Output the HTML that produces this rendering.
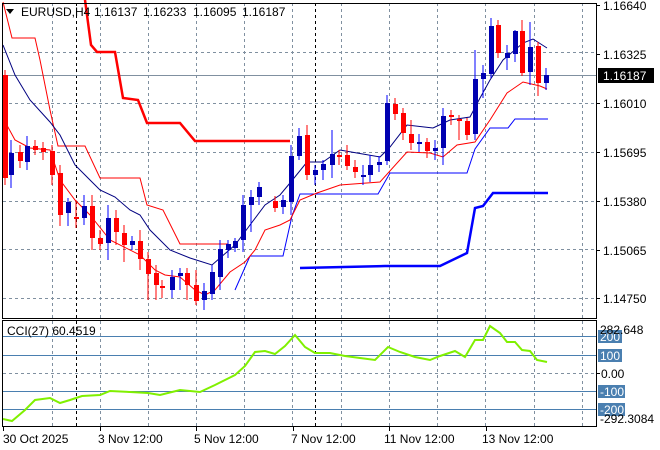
<!DOCTYPE html>
<html><head><meta charset="utf-8"><style>
html,body{margin:0;padding:0;background:#fff;}
svg{display:block;font-family:"Liberation Sans",sans-serif;}
</style></head><body>
<svg width="660" height="450" xmlns="http://www.w3.org/2000/svg">
<rect width="660" height="450" fill="#fff"/>
<g stroke="#8090a0" stroke-dasharray="3,3" stroke-width="1">
<path d="M52.5 3V318M100.5 3V318M148.5 3V318M196.5 3V318M244.5 3V318M292.5 3V318M341.5 3V318M389.5 3V318M437.5 3V318M485.5 3V318M534.5 3V318M582.5 3V318"/>
<path d="M52.5 321V426M100.5 321V426M148.5 321V426M196.5 321V426M244.5 321V426M292.5 321V426M341.5 321V426M389.5 321V426M437.5 321V426M485.5 321V426M534.5 321V426M582.5 321V426"/>
<path d="M3 52.5H596M3 103.5H596M3 152.5H596M3 201.5H596M3 249.5H596M3 298.5H596M3 373.5H596"/>
</g>
<g stroke="#000" stroke-dasharray="3,3"><path d="M76.5 3V318M76.5 321V426M315.5 3V318M315.5 321V426"/></g>
<path d="M3 75.5H596" stroke="#8090a0"/>
<g stroke="#4a7fb0"><path d="M3 336.5H596M3 355.5H596M3 391.5H596M3 409.5H596"/></g>

<polyline fill="none" stroke="#f00" stroke-width="2.5" points="85,0 91,45 97,52 115,52 123,98 138,100 147,123 180,123 195,141 290,141"/>
<polyline fill="none" stroke="#00f" stroke-width="2.5" points="300,268 385,266 440,266 467,253 475,208 483,206 493,193 548,193"/>
<polyline fill="none" stroke="#f00" stroke-width="1" points="3,2 12,38 35,38 40,60 50,110 58,146 85,146 100,178 140,178 147,205 163,210 180,244 228,244"/>
<polyline fill="none" stroke="#00f" stroke-width="1" points="235,290 250,256 283,256 292,216 300,194 378,194 390,173 467,173 475,149 490,128 508,128 515,119 548,119"/>
<polyline fill="none" stroke="#f00" stroke-width="1" points="3,118 15,140 30,148 50,150 60,180 75,200 90,215 110,240 140,255 155,270 165,275 180,277 195,290 205,295 215,290 230,272 245,262 255,250 265,230 280,225 290,220 300,200 317,193 340,185 380,182 407,152 430,153 443,157 457,145 475,142 490,120 507,93 523,82 540,86 547,89"/>
<polyline fill="none" stroke="#000080" stroke-width="1" points="3,45 15,75 30,100 50,122 60,135 75,165 90,180 100,190 115,197 130,210 140,215 150,230 170,250 190,258 212,265 220,258 235,245 250,225 265,205 280,195 290,183 307,162 323,162 340,150 357,153 380,157 390,147 407,125 433,128 450,120 470,117 480,98 490,80 503,60 523,43 533,39 547,48"/>

<g>
<path stroke="#f00" d="M5 70V185M20 145V168M35 140V155M43 142V160M52 145V185M60 165V226M76 200V228M92 195V250M100 230V250M116 210V245M124 225V262M140 230V270M148 252V300M156 265V300M162 280V298M187 268V300M196 270V305M275 196V212M307 125V180M339 150V165M347 145V170M355 160V178M395 98V120M403 108V140M411 120V150M427 138V158M451 110V125M459 115V140M467 118V140M498 20V58M522 20V76M538 42V96"/>
<path stroke="#00f" d="M11 140V188M27 136V170M68 198V226M84 195V225M108 205V260M132 236V250M172 270V298M180 268V290M204 283V310M212 265V300M220 240V290M228 240V258M235 238V252M243 195V252M251 190V232M259 182V205M283 195V214M291 145V215M299 128V160M315 165V185M323 160V180M332 130V178M363 165V185M370 155V182M379 156V172M387 95V165M419 134V152M435 140V160M443 108V165M475 50V140M483 65V98M491 18V78M507 45V70M515 30V62M530 22V85M546 68V90"/>
</g>
<g fill="#f00">
<rect x="3" y="75" width="5" height="103"/><rect x="18" y="152" width="5" height="9"/><rect x="33" y="146" width="5" height="4"/><rect x="41" y="148" width="5" height="4"/><rect x="50" y="151" width="5" height="24"/><rect x="58" y="173" width="5" height="42"/><rect x="74" y="217" width="5" height="2"/><rect x="90" y="206" width="5" height="32"/><rect x="98" y="238" width="5" height="6"/><rect x="114" y="218" width="5" height="14"/><rect x="122" y="233" width="5" height="12"/><rect x="138" y="241" width="5" height="18"/><rect x="146" y="259" width="5" height="15"/><rect x="154" y="273" width="5" height="12"/><rect x="160" y="286" width="5" height="2"/><rect x="185" y="273" width="5" height="12"/><rect x="194" y="285" width="5" height="16"/><rect x="273" y="201" width="5" height="7"/><rect x="305" y="135" width="5" height="40"/><rect x="337" y="155" width="5" height="2"/><rect x="345" y="155" width="5" height="11"/><rect x="353" y="167" width="5" height="5"/><rect x="393" y="104" width="5" height="10"/><rect x="401" y="113" width="5" height="20"/><rect x="409" y="134" width="5" height="9"/><rect x="425" y="142" width="5" height="9"/><rect x="449" y="115" width="5" height="2"/><rect x="457" y="119" width="5" height="2"/><rect x="465" y="121" width="5" height="14"/><rect x="496" y="25" width="5" height="28"/><rect x="520" y="31" width="5" height="42"/><rect x="536" y="46" width="5" height="37"/>
</g>
<g fill="#0000b0">
<rect x="9" y="153" width="5" height="22"/><rect x="25" y="146" width="5" height="16"/><rect x="66" y="202" width="5" height="11"/><rect x="82" y="206" width="5" height="12"/><rect x="106" y="218" width="5" height="25"/><rect x="130" y="241" width="5" height="4"/><rect x="170" y="277" width="5" height="13"/><rect x="178" y="273" width="5" height="3"/><rect x="202" y="291" width="5" height="9"/><rect x="210" y="272" width="5" height="22"/><rect x="218" y="249" width="5" height="28"/><rect x="226" y="244" width="5" height="6"/><rect x="233" y="241" width="5" height="7"/><rect x="241" y="205" width="5" height="35"/><rect x="249" y="197" width="5" height="8"/><rect x="257" y="187" width="5" height="10"/><rect x="281" y="200" width="5" height="7"/><rect x="289" y="156" width="5" height="46"/><rect x="297" y="136" width="5" height="20"/><rect x="313" y="170" width="5" height="5"/><rect x="321" y="164" width="5" height="6"/><rect x="330" y="154" width="5" height="11"/><rect x="361" y="175" width="5" height="2"/><rect x="368" y="165" width="5" height="10"/><rect x="377" y="162" width="5" height="3"/><rect x="385" y="103" width="5" height="58"/><rect x="417" y="142" width="5" height="2"/><rect x="433" y="148" width="5" height="3"/><rect x="441" y="116" width="5" height="32"/><rect x="473" y="79" width="5" height="55"/><rect x="481" y="73" width="5" height="6"/><rect x="489" y="26" width="5" height="48"/><rect x="505" y="53" width="5" height="5"/><rect x="513" y="31" width="5" height="23"/><rect x="528" y="47" width="5" height="25"/><rect x="544" y="75" width="5" height="8"/>
</g>

<polyline fill="none" stroke="#80f000" stroke-width="2" points="3,419 12,421 25,410 35,400 50,398 60,403 70,400 82,396 100,395 110,391 130,392 148,393 160,395 180,390 200,392 215,385 235,375 245,366 255,352 265,351 275,354 285,346 295,335 305,347 315,353 330,353 345,356 360,358 375,360 388,347 400,352 415,357 430,360 440,356 455,351 465,357 475,340 483,340 490,326 500,333 507,342 515,342 522,350 530,351 537,360 547,362"/>

<g stroke="#000" fill="none">
<rect x="2.5" y="3.5" width="594" height="315"/>
<rect x="2.5" y="320.5" width="594" height="106"/>
</g>
<g stroke="#000"><path d="M597 5.5h3M597 54.5h3M597 103.5h3M597 152.5h3M597 201.5h3M597 250.5h3M597 298.5h3M597 373.5h3M3.5 427v4M100.5 427v4M196.5 427v4M293.5 427v4M389.5 427v4M486.5 427v4"/></g>

<path d="M6 9h8l-4 5z" fill="#000"/>
<g font-size="12" fill="#000">
<text x="21" y="16">EURUSD,H4</text>
<text x="94" y="16">1.16137</text>
<text x="143" y="16">1.16233</text>
<text x="193" y="16">1.16095</text>
<text x="242" y="16">1.16187</text>
</g>
<text x="7" y="335" font-size="12" fill="#000">CCI(27) 60.4519</text>

<g font-size="12" fill="#000">
<text x="603" y="10">1.16640</text>
<text x="603" y="59">1.16325</text>
<text x="603" y="108">1.16010</text>
<text x="603" y="157">1.15695</text>
<text x="603" y="206">1.15380</text>
<text x="603" y="255">1.15065</text>
<text x="603" y="303">1.14750</text>
</g>
<rect x="598" y="68" width="56" height="15" fill="#000"/>
<text x="603" y="80" font-size="12" fill="#fff">1.16187</text>
<g fill="#4a7fb0">
<rect x="598" y="330" width="24" height="13"/><rect x="598" y="349" width="24" height="13"/><rect x="598" y="385" width="27" height="13"/><rect x="598" y="403" width="27" height="13"/>
</g>
<g font-size="12">
<text x="600" y="341" fill="#fff">200</text>
<text x="600" y="360" fill="#fff">100</text>
<text x="600" y="396" fill="#fff">-100</text>
<text x="600" y="414" fill="#fff">-200</text>
<text x="600" y="334" fill="#000">282.648</text>
<text x="601" y="378" fill="#000">0.00</text>
<text x="600" y="423" fill="#000">-292.3084</text>
</g>
<g font-size="12" fill="#000">
<text x="3" y="443">30 Oct 2025</text>
<text x="98" y="443">3 Nov 12:00</text>
<text x="194" y="443">5 Nov 12:00</text>
<text x="291" y="443">7 Nov 12:00</text>
<text x="384" y="443">11 Nov 12:00</text>
<text x="482" y="443">13 Nov 12:00</text>
</g>
</svg>
</body></html>
